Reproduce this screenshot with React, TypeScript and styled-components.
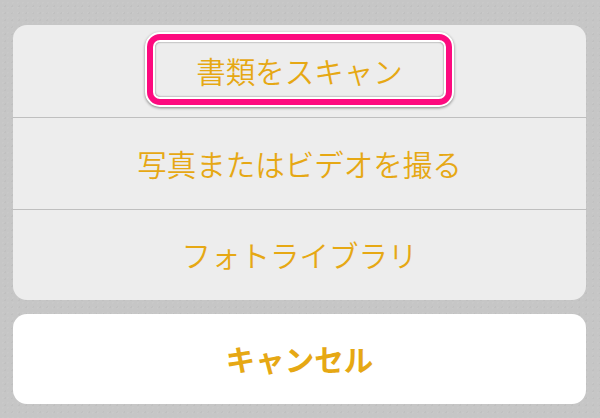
import React from "react";
import styled, { createGlobalStyle } from "styled-components";

const GlobalStyle = createGlobalStyle`
  html, body {
    margin: 0;
    padding: 0;
    background: #c7c7c7;
  }
  body {
    font-family: "Noto Sans CJK JP", "Noto Sans", sans-serif;
  }
`;

const Page = styled.div`
  width: 600px;
  height: 418px;
  box-sizing: border-box;
  padding: 25px 14px 0 13px;
  display: flex;
  flex-direction: column;
  gap: 14px;
  background-color: #c6c6c6;
  background-image:
    radial-gradient(rgba(255, 255, 255, 0.05) 1px, transparent 1px),
    radial-gradient(rgba(0, 0, 0, 0.03) 1px, transparent 1px);
  background-size: 5px 5px, 7px 7px;
  background-position: 0 0, 2px 3px;
`;

const Sheet = styled.div`
  display: flex;
  flex-direction: column;
  background: #ededed;
  border-radius: 14px;
  overflow: hidden;
`;

const Row = styled.div<{ $h: number; $divider?: boolean }>`
  box-sizing: border-box;
  height: ${(p) => p.$h}px;
  display: flex;
  align-items: center;
  justify-content: center;
  border-top: ${(p) => (p.$divider ? "1px solid #bfbfbf" : "none")};
`;

const Label = styled.span<{ $bold?: boolean }>`
  font-family: "Noto Sans CJK JP", "Noto Sans", sans-serif;
  font-size: 29.5px;
  font-weight: ${(p) => (p.$bold ? 700 : 350)};
  color: #e6a814;
  line-height: 1;
  white-space: nowrap;
`;

const Highlight = styled.div`
  box-sizing: border-box;
  width: 309px;
  height: 75px;
  margin-top: -3px;
  border: 2px solid #ffffff;
  border-radius: 15px;
  background: #ffffff;
  box-shadow: 0 1px 3px rgba(0, 0, 0, 0.45);
  display: flex;
`;

const HighlightPink = styled.div`
  flex: 1;
  display: flex;
  border: 6px solid #fd0a7f;
  border-radius: 13px;
  background: #ffffff;
  padding: 2px;
`;

const HighlightInner = styled.div`
  flex: 1;
  display: flex;
  align-items: center;
  justify-content: center;
  border-radius: 5px;
  background: #ededed;
  box-shadow: inset 0 0 2px rgba(0, 0, 0, 0.55);
  padding-top: 3px;
`;

const CancelSheet = styled.div`
  height: 90px;
  background: #ffffff;
  border-radius: 14px;
  display: flex;
  align-items: center;
  justify-content: center;
`;

export default function App() {
  return (
    <>
      <GlobalStyle />
      <Page>
        <Sheet>
          <Row $h={92}>
            <Highlight>
              <HighlightPink>
                <HighlightInner>
                  <Label>書類をスキャン</Label>
                </HighlightInner>
              </HighlightPink>
            </Highlight>
          </Row>
          <Row $h={92} $divider>
            <Label>写真またはビデオを撮る</Label>
          </Row>
          <Row $h={91} $divider>
            <Label>フォトライブラリ</Label>
          </Row>
        </Sheet>
        <CancelSheet>
          <Label $bold>キャンセル</Label>
        </CancelSheet>
      </Page>
    </>
  );
}
